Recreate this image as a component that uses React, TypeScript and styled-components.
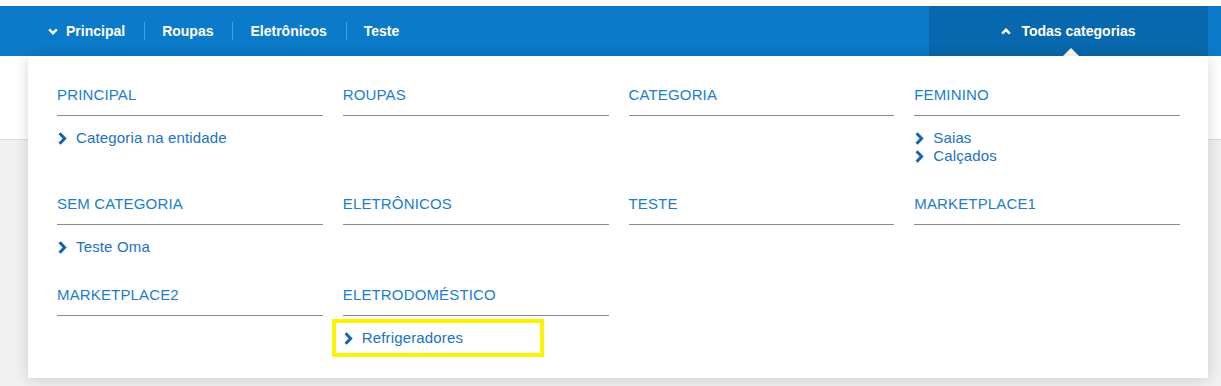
import React, { type FC } from 'react'
import styled, { createGlobalStyle } from 'styled-components'

type Category = {
	title: string
	items: string[]
	highlight?: string
}

const categories: Category[] = [
	{ title: 'PRINCIPAL', items: ['Categoria na entidade'] },
	{ title: 'ROUPAS', items: [] },
	{ title: 'CATEGORIA', items: [] },
	{ title: 'FEMININO', items: ['Saias', 'Calçados'] },
	{ title: 'SEM CATEGORIA', items: ['Teste Oma'] },
	{ title: 'ELETRÔNICOS', items: [] },
	{ title: 'TESTE', items: [] },
	{ title: 'MARKETPLACE1', items: [] },
	{ title: 'MARKETPLACE2', items: [] },
	{ title: 'ELETRODOMÉSTICO', items: ['Refrigeradores'], highlight: 'Refrigeradores' },
]

const navLinks = ['Principal', 'Roupas', 'Eletrônicos', 'Teste']

const GlobalStyle = createGlobalStyle`
	*, *::before, *::after {
		box-sizing: border-box;
	}
	body {
		margin: 0;
		font-family: 'Liberation Sans', Arial, sans-serif;
		background: #fff;
	}
`

const Page = styled.div`
	position: relative;
	min-height: 100vh;
	display: flex;
	flex-direction: column;
	padding-top: 6px;
	background: #fff;
`

const NavBar = styled.nav`
	height: 50px;
	display: flex;
	justify-content: space-between;
	background: #0b7ac9;
	color: #fff;
`

const NavList = styled.ul`
	display: flex;
	align-items: center;
	margin: 0;
	padding: 0 0 0 48px;
	list-style: none;
`

const NavItem = styled.li<{ $first?: boolean }>`
	display: flex;
	align-items: center;
	gap: 8px;
	height: 18px;
	padding: 0 19px 0 ${({ $first }) => ($first ? '0' : '17px')};
	border-left: ${({ $first }) => ($first ? 'none' : '1px solid rgba(255, 255, 255, 0.28)')};
	font-size: 14px;
	font-weight: 700;
`

const AllCategories = styled.button`
	position: relative;
	width: 279px;
	margin-right: 13px;
	display: flex;
	align-items: center;
	justify-content: center;
	gap: 10px;
	border: 0;
	background: #0868ad;
	color: #fff;
	font-family: inherit;
	font-size: 14px;
	font-weight: 700;
	cursor: pointer;

	&::after {
		content: '';
		position: absolute;
		bottom: 0;
		left: 50%;
		margin-left: -6px;
		border-left: 8px solid transparent;
		border-right: 8px solid transparent;
		border-bottom: 8px solid #fff;
	}
`

const PageTop = styled.div`
	height: 84px;
	border-bottom: 1px solid #dcdcdc;
	background: #fff;
`

const PageRest = styled.div`
	flex: 1;
	background: #f1f1f1;
`

const Dropdown = styled.div`
	position: absolute;
	top: 56px;
	left: 28px;
	width: 1180px;
	padding: 29px 28px 31px 29px;
	display: grid;
	grid-template-columns: repeat(4, 1fr);
	column-gap: 20px;
	row-gap: 29px;
	background: #fff;
	box-shadow: 0 1px 14px rgba(0, 0, 0, 0.16);
`

const Column = styled.div`
	display: flex;
	flex-direction: column;
`

const Heading = styled.h3`
	margin: 0 0 13px;
	padding-bottom: 10px;
	border-bottom: 1px solid #8a8a8a;
	font-size: 15px;
	font-weight: 400;
	line-height: 20px;
	letter-spacing: 0.15px;
	color: #1a7dce;
`

const ItemList = styled.ul`
	margin: 0;
	padding: 0;
	list-style: none;
`

const Item = styled.li<{ $highlighted?: boolean }>`
	position: relative;
	display: flex;
	align-items: center;
	gap: 9px;
	padding-left: 1px;
	font-size: 15px;
	line-height: 18px;
	letter-spacing: 0.15px;
	color: #1b72c4;

	svg {
		flex-shrink: 0;
	}

	&::after {
		content: '';
		display: ${({ $highlighted }) => ($highlighted ? 'block' : 'none')};
		position: absolute;
		left: -11px;
		top: -10px;
		width: 212px;
		height: 38px;
		border: 4px solid #fff200;
	}
`

const ChevronRight: FC = () => (
	<svg width='9' height='13' viewBox='0 0 9 13'>
		<polyline points='1.6,1.3 6.6,6.5 1.6,11.7' fill='none' stroke='#1562b0' strokeWidth='3' />
	</svg>
)

const ChevronDown: FC<{ up?: boolean }> = ({ up }) => (
	<svg width='10' height='7' viewBox='0 0 10 7' style={up ? { transform: 'rotate(180deg)' } : undefined}>
		<polyline points='1.2,1.4 5,5.2 8.8,1.4' fill='none' stroke='#fff' strokeWidth='2.4' />
	</svg>
)

export default function App() {
	return (
		<>
			<GlobalStyle />
			<Page>
				<NavBar>
					<NavList>
						{navLinks.map((link, i) => (
							<NavItem key={link} $first={i === 0}>
								{i === 0 && <ChevronDown />}
								{link}
							</NavItem>
						))}
					</NavList>
					<AllCategories type='button'>
						<ChevronDown up />
						Todas categorias
					</AllCategories>
				</NavBar>
				<PageTop />
				<PageRest />

				<Dropdown>
					{categories.map((cat) => (
						<Column key={cat.title}>
							<Heading>{cat.title}</Heading>
							<ItemList>
								{cat.items.map((item) => (
									<Item key={item} $highlighted={cat.highlight === item}>
										<ChevronRight />
										{item}
									</Item>
								))}
							</ItemList>
						</Column>
					))}
				</Dropdown>
			</Page>
		</>
	)
}
